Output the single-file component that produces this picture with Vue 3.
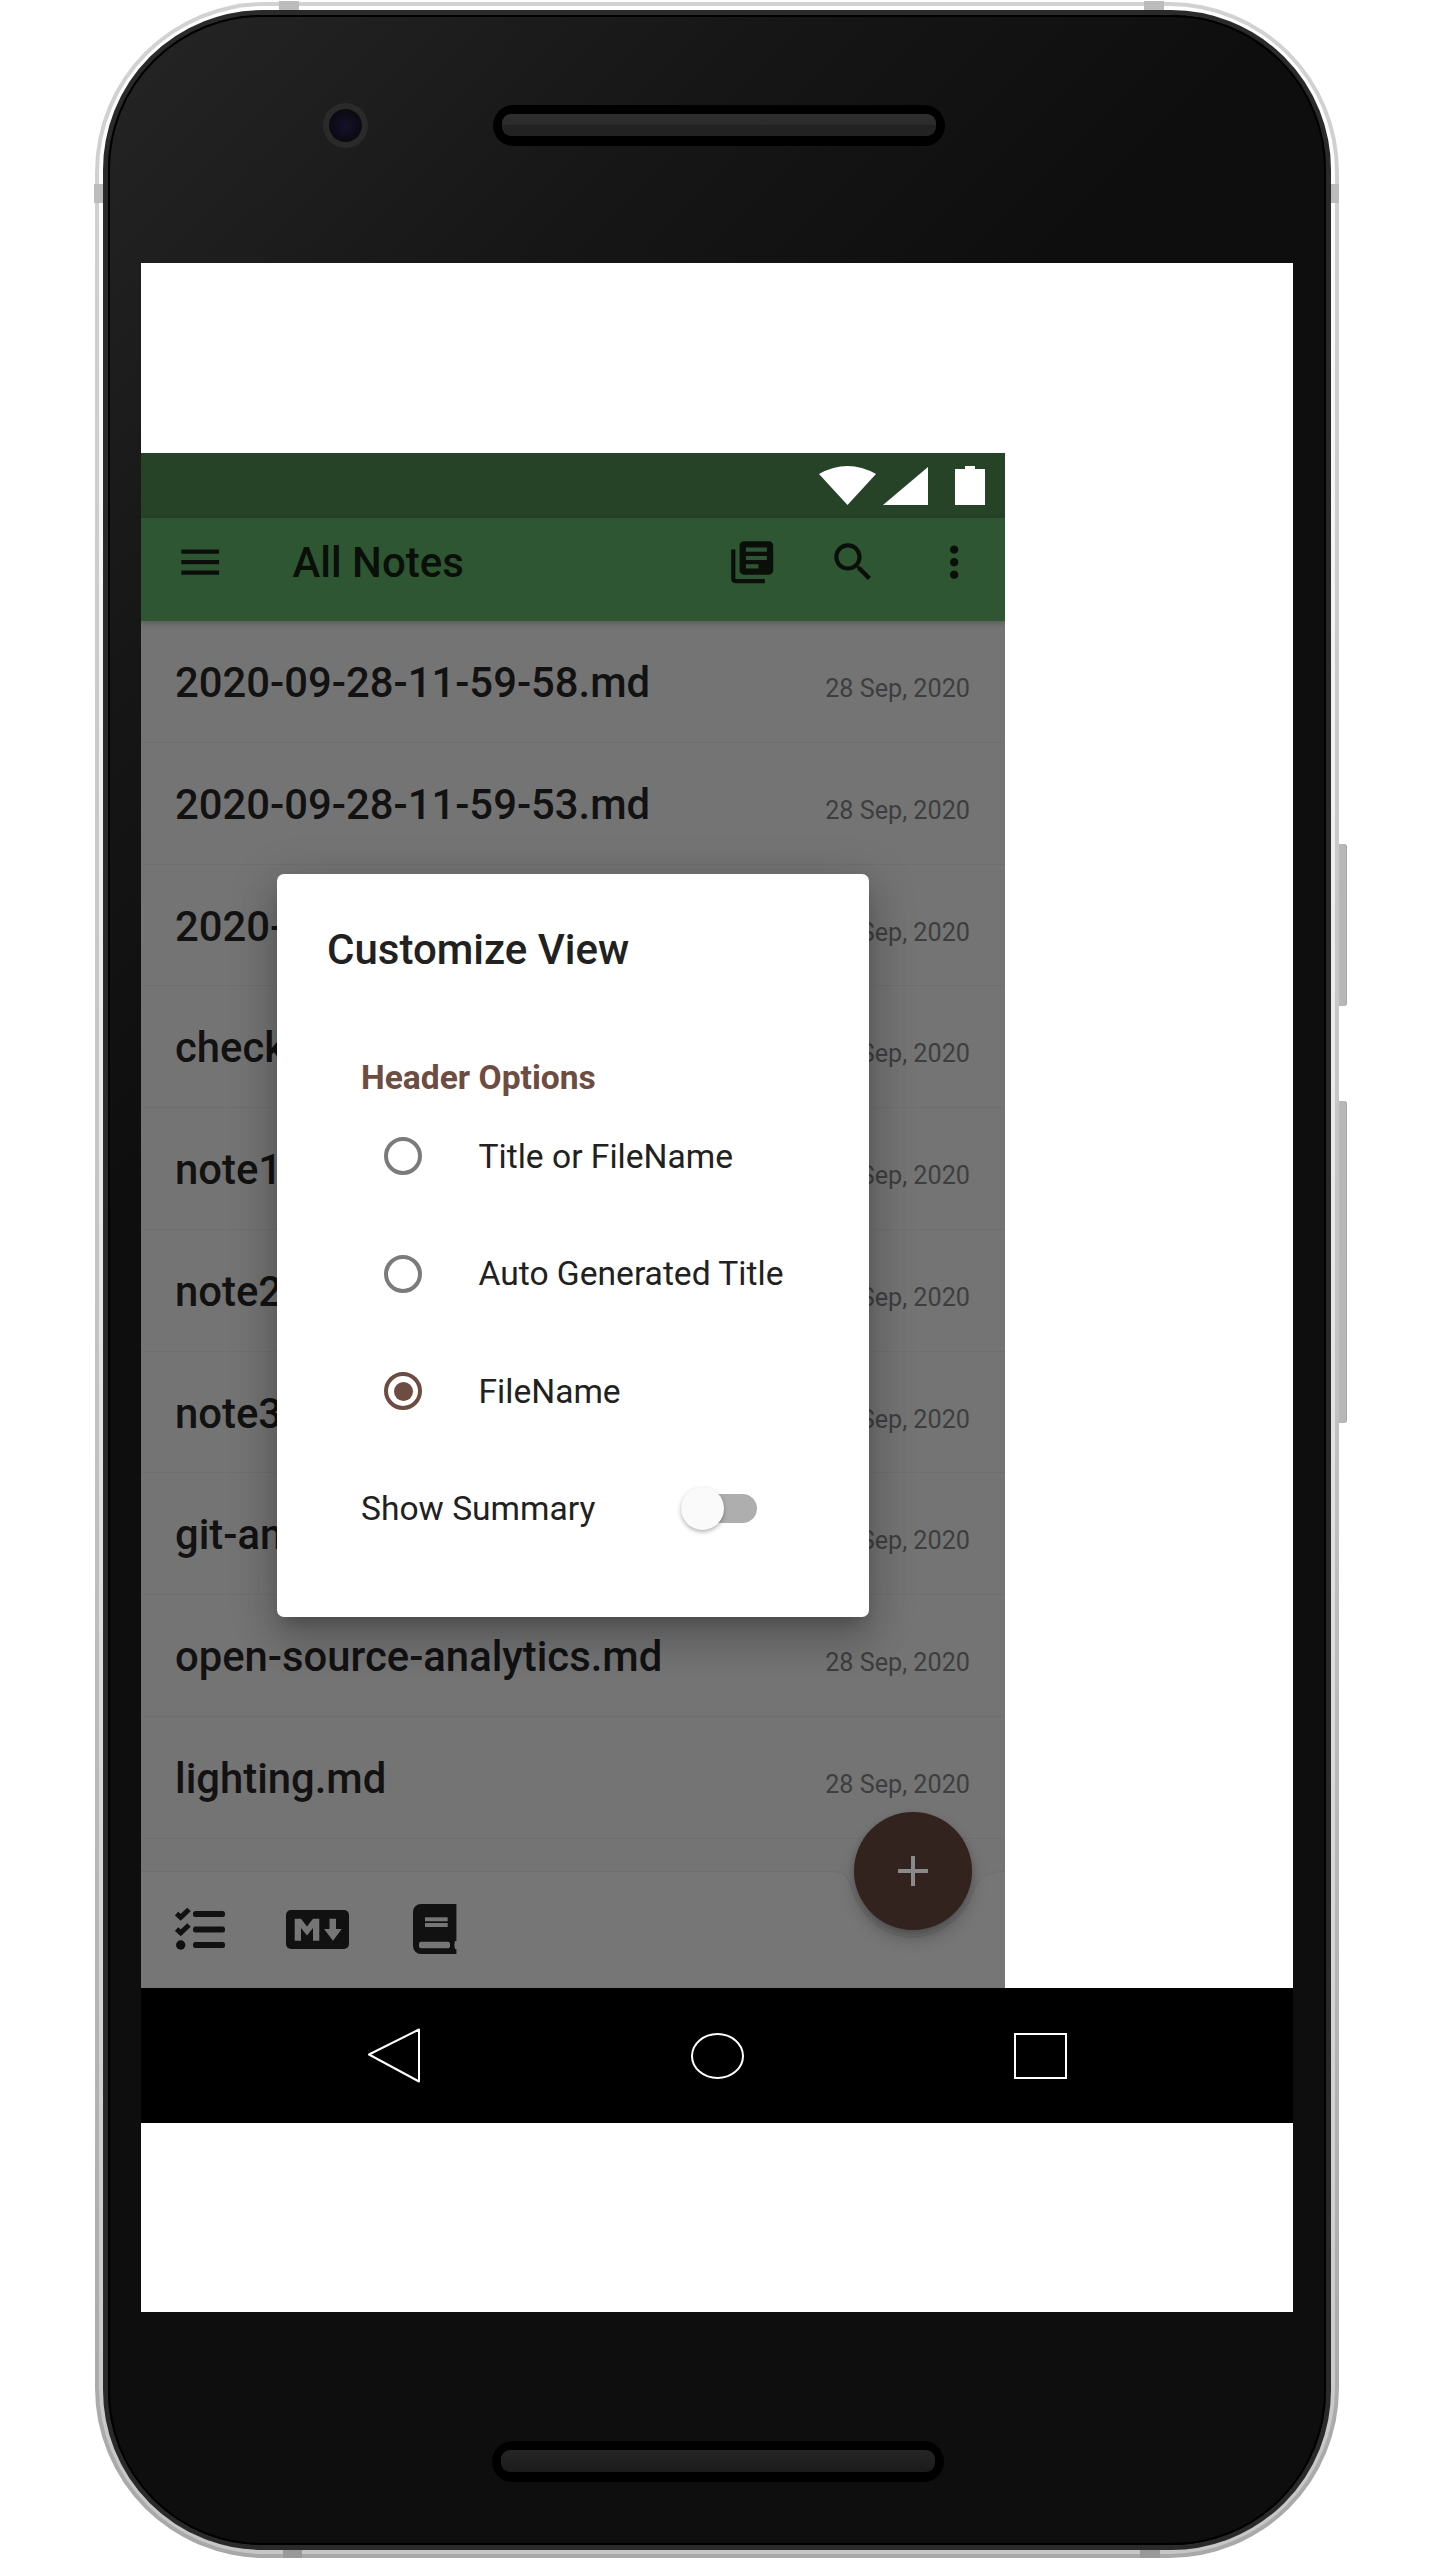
<script setup>
const notes = [
  '2020-09-28-11-59-58.md',
  '2020-09-28-11-59-53.md',
  '2020-09-28-11-59-48.md',
  'checklist.md',
  'note1.md',
  'note2.md',
  'note3.md',
  'git-annex.md',
  'open-source-analytics.md',
  'lighting.md'
]
const options = [
  { label: 'Title or FileName', checked: false },
  { label: 'Auto Generated Title', checked: false },
  { label: 'FileName', checked: true }
]
</script>

<template>
  <div class="page">
    <div class="phone">
      <span class="tab tab-t1"></span>
      <span class="tab tab-t2"></span>
      <span class="tab tab-b1"></span>
      <span class="tab tab-b2"></span>
      <span class="tab tab-l"></span>
      <span class="tab tab-r"></span>
      <span class="side side-1"></span>
      <span class="side side-2"></span>
      <div class="gap">
        <div class="case">
          <div class="bezel">
            <div class="top-row">
              <div class="camera"><div class="lens"></div></div>
              <div class="speaker"><div class="grille"></div></div>
            </div>
            <div class="screen">
              <div class="blank-top"></div>
              <div class="app">
                <div class="status">
                  <svg width="57" height="39" viewBox="0 0 57 39"><path d="M0 8Q28.5-8 57 8L28.5 39Z" fill="#fff"/></svg>
                  <svg class="signal" width="45" height="39" viewBox="0 0 45 39"><path d="M45 1V39H0Z" fill="#fff"/></svg>
                  <svg class="battery" width="30" height="39" viewBox="0 0 30 39"><path d="M10 0H20V3H30V39H0V3H10Z" fill="#fff"/></svg>
                </div>
                <div class="toolbar">
                  <svg class="tb-menu" width="50.4" height="50.4" viewBox="0 0 24 24"><path d="M3 18h18v-2H3v2zm0-5h18v-2H3v2zm0-7v2h18V6H3z"/></svg>
                  <div class="tb-title">All Notes</div>
                  <div class="tb-action"><svg width="50.4" height="50.4" viewBox="0 0 24 24"><path d="M4 6H2v14c0 1.1.9 2 2 2h14v-2H4V6zm16-4H8c-1.1 0-2 .9-2 2v12c0 1.1.9 2 2 2h12c1.1 0 2-.9 2-2V4c0-1.1-.9-2-2-2zm-1 9H9V9h10v2zm-4 4H9v-2h6v2zm4-8H9V5h10v2z"/></svg></div>
                  <div class="tb-action"><svg width="50.4" height="50.4" viewBox="0 0 24 24"><path d="M15.5 14h-.79l-.28-.27C15.41 12.59 16 11.11 16 9.5 16 5.91 13.09 3 9.5 3S3 5.91 3 9.5 5.91 16 9.5 16c1.61 0 3.09-.59 4.23-1.57l.27.28v.79l5 4.99L20.49 19l-4.99-5zm-6 0C7.01 14 5 11.99 5 9.5S7.01 5 9.5 5 14 7.01 14 9.5 11.99 14 9.5 14z"/></svg></div>
                  <div class="tb-action"><svg width="50.4" height="50.4" viewBox="0 0 24 24"><path d="M12 8c1.1 0 2-.9 2-2s-.9-2-2-2-2 .9-2 2 .9 2 2 2zm0 2c-1.1 0-2 .9-2 2s.9 2 2 2 2-.9 2-2-.9-2-2-2zm0 6c-1.1 0-2 .9-2 2s.9 2 2 2 2-.9 2-2-.9-2-2-2z"/></svg></div>
                </div>
                <div class="list">
                  <div v-for="note in notes" :key="note" class="row">
                    <span class="row-title">{{ note }}</span>
                    <span class="row-date">28 Sep, 2020</span>
                  </div>
                </div>
                <div class="bottom-bar">
                  <svg class="bar-shape" width="864" height="117" viewBox="0 0 864 117">
                    <path d="M0 0H692C704 0 708 8 711 18C719 45 743 66 771 66C799 66 825 45 833 18C836 8 846 0 864 0V117H0Z" fill="#767676"/>
                    <path d="M0 .5H692C704 .5 708 8 711 18C719 45 743 66 771 66C799 66 825 45 833 18C836 8 846 .5 864 .5" fill="none" stroke="#6e6e6e" stroke-width="1"/>
                  </svg>
                  <svg class="bi bi-check" width="51" height="42" viewBox="0 0 51 42">
                    <path d="M1.5 5.5L5.7 9.3L14 1.5M1.5 21L5.7 24.8L14 17" fill="none" stroke="#111" stroke-width="5"/>
                    <rect x="18" y="3" width="32" height="6" rx="2.5" fill="#111"/>
                    <rect x="18" y="18.5" width="32" height="6" rx="2.5" fill="#111"/>
                    <rect x="18" y="34" width="32" height="6" rx="2.5" fill="#111"/>
                    <circle cx="5.7" cy="37" r="4.7" fill="#111"/>
                  </svg>
                  <svg class="bi bi-md" width="63" height="39" viewBox="0 0 63 39">
                    <rect width="63" height="39" rx="5" fill="#111"/>
                    <path d="M8.7 30.7V8.7H15L21 16.5L27 8.7H33.3V30.7H27V18L21 25.5L15 18V30.7Z" fill="#767676"/>
                    <path d="M43.5 8.7H50V19H55.7L47 30.7L38 19H43.5Z" fill="#767676"/>
                  </svg>
                  <svg class="bi bi-book" width="44" height="50" viewBox="0 0 44 50">
                    <path d="M8 0H43.4V37H42Q40.5 41 42 45H43.4V50H8A8 8 0 0 1 0 42V8A8 8 0 0 1 8 0Z" fill="#111"/>
                    <rect x="6" y="37.7" width="31" height="6.6" rx="2" fill="#767676"/>
                    <rect x="12" y="13.3" width="22.7" height="4" fill="#767676"/>
                    <rect x="12" y="19" width="22.7" height="4" fill="#767676"/>
                  </svg>
                </div>
                <div class="fab"><span class="plus-h"></span><span class="plus-v"></span></div>
                <div class="dialog">
                  <div class="dlg-title">Customize View</div>
                  <div class="dlg-body">
                    <div class="dlg-head">Header Options</div>
                    <div v-for="opt in options" :key="opt.label" class="opt">
                      <span class="radio" :class="{ on: opt.checked }"><span v-if="opt.checked" class="dot"></span></span>
                      <span class="opt-label">{{ opt.label }}</span>
                    </div>
                    <div class="summary">
                      <span class="sum-label">Show Summary</span>
                      <span class="track"><span class="thumb"></span></span>
                    </div>
                  </div>
                </div>
              </div>
              <div class="nav">
                <div class="nav-item"><svg width="54" height="55" viewBox="0 0 54 55"><path d="M52 1.5V53.5L2 26.5Z" fill="none" stroke="#fff" stroke-width="2" stroke-linejoin="round"/></svg></div>
                <div class="nav-item"><svg width="53" height="46" viewBox="0 0 53 46"><ellipse cx="26.5" cy="23" rx="25.5" ry="22" fill="none" stroke="#fff" stroke-width="2"/></svg></div>
                <div class="nav-item"><svg width="53" height="46" viewBox="0 0 53 46"><rect x="1" y="1" width="51" height="44" fill="none" stroke="#fff" stroke-width="2"/></svg></div>
              </div>
              <div class="blank-bottom"></div>
            </div>
            <div class="bottom-row">
              <div class="speaker low"><div class="grille"></div></div>
            </div>
          </div>
        </div>
      </div>
    </div>
  </div>
</template>

<style>
body { margin: 0; background: #fff; }
</style>

<style scoped>
.page {
  width: 1440px;
  height: 2560px;
  box-sizing: border-box;
  padding: 2px 0 0 95px;
  background: #fff;
  font-family: Roboto, "Liberation Sans", sans-serif;
  overflow: hidden;
}
.phone {
  position: relative;
  width: 1244px;
  height: 2556px;
  box-sizing: border-box;
  padding: 4px;
  border-radius: 170px;
  background: linear-gradient(180deg, #d2d2d2 0%, #c4c4c4 50%, #a8a8a8 100%);
}
.gap {
  height: 100%;
  box-sizing: border-box;
  padding: 4px;
  border-radius: 166px;
  background: linear-gradient(180deg, #fff 0%, #e6e6e6 50%, #c6c6c6 100%);
}
.case {
  height: 100%;
  box-sizing: border-box;
  border: 5px solid #2a2a2a;
  border-radius: 160px;
  background: #000;
}
.bezel {
  height: 100%;
  box-sizing: border-box;
  border: 2px solid #000;
  border-radius: 154px;
  padding: 0 31px;
  background: linear-gradient(135deg, #252525 0%, #161616 18%, #0e0e0e 32%, #0e0e0e 100%);
}
.tab { position: absolute; background: #bcbcbc; }
.tab-t1 { left: 184px; top: -1px; width: 20px; height: 9px; }
.tab-t2 { left: 1049px; top: -1px; width: 20px; height: 9px; }
.tab-b1 { left: 188px; bottom: 0; width: 19px; height: 8px; background: #999; }
.tab-b2 { left: 1045px; bottom: 0; width: 20px; height: 8px; background: #999; }
.tab-l { left: -1px; top: 182px; width: 9px; height: 19px; }
.tab-r { right: 0; top: 182px; width: 8px; height: 19px; }
.side {
  position: absolute;
  left: 1244px;
  width: 8px;
  box-sizing: border-box;
  background: #b7b7b7;
  border-right: 1px solid #a6a6a6;
  border-radius: 0 3px 3px 0;
}
.side-1 { top: 842px; height: 162px; }
.side-2 { top: 1099px; height: 322px; }

.top-row {
  height: 217px;
  margin-bottom: 29px;
  box-sizing: border-box;
  padding-left: 182px;
  display: flex;
  align-items: center;
  gap: 125px;
}
.camera {
  width: 45px;
  height: 45px;
  border-radius: 50%;
  background: #2a2a2a;
  display: flex;
  align-items: center;
  justify-content: center;
}
.lens {
  width: 33px;
  height: 33px;
  border-radius: 50%;
  background: radial-gradient(circle, #15112a 0%, #0b0a12 70%);
}
.speaker {
  width: 452px;
  height: 41px;
  box-sizing: border-box;
  padding: 9px 9px 10px;
  background: #000;
  border-radius: 21px;
}
.grille {
  height: 22px;
  border-radius: 9px;
  background: linear-gradient(180deg, #2f2f2f 0%, #2a2a2a 50%, #222 52%, #222 100%);
}
.low .grille { background: linear-gradient(180deg, #262626 0%, #202020 50%, #1b1b1b 100%); }
.bottom-row {
  height: 231px;
  box-sizing: border-box;
  padding: 129px 0 0 351px;
}

.screen {
  width: 1152px;
  height: 2049px;
  display: flex;
  flex-direction: column;
  background: #fff;
}
.blank-top { height: 190px; flex: none; }
.blank-bottom { flex: 1; }
.app {
  position: relative;
  width: 864px;
  height: 1535px;
  flex: none;
  display: flex;
  flex-direction: column;
  overflow: hidden;
}
.status {
  height: 65px;
  flex: none;
  box-sizing: border-box;
  padding: 13px 20px 0 0;
  display: flex;
  justify-content: flex-end;
  align-items: flex-start;
  background: #264327;
}
.signal { margin-left: 7px; }
.battery { margin-left: 27px; }
.toolbar {
  position: relative;
  z-index: 2;
  height: 103px;
  flex: none;
  box-sizing: border-box;
  padding: 19px 0 0 34px;
  display: flex;
  align-items: flex-start;
  background: #2f5632;
  box-shadow: 0 2px 6px rgba(0, 0, 0, .25);
  color: #0a0f0a;
}
.toolbar svg { fill: #0a0f0a; display: block; }
.tb-title {
  margin: 1px 0 0 67px;
  flex: 1;
  font-size: 42px;
  font-weight: 500;
  line-height: 50px;
}
.tb-action {
  width: 101px;
  display: flex;
  justify-content: center;
}
.list {
  flex: 1;
  min-height: 0;
  overflow: hidden;
  background: #747474;
}
.row {
  height: 121.75px;
  box-sizing: border-box;
  padding: 39px 35px 0 34px;
  display: flex;
  justify-content: space-between;
  align-items: baseline;
  border-bottom: 1px solid #6f6f6f;
}
.row-title {
  font-size: 41.8px;
  line-height: 46px;
  font-weight: 500;
  color: #121212;
}
.row-date {
  font-size: 25.2px;
  color: #3e3e3e;
}
.bottom-bar {
  position: relative;
  height: 117px;
  flex: none;
  box-sizing: border-box;
  padding-left: 34px;
  background: #747474;
}
.bar-shape { position: absolute; left: 0; top: 0; }
.bi { position: absolute; }
.bi-check { left: 34px; top: 37px; }
.bi-md { left: 145px; top: 39px; }
.bi-book { left: 272px; top: 33px; }
.fab {
  position: absolute;
  left: 713px;
  top: 1359px;
  width: 118px;
  height: 118px;
  border-radius: 50%;
  background: #33231f;
  box-shadow: 0 10px 16px rgba(0, 0, 0, .2), 0 3px 6px rgba(0, 0, 0, .18);
}
.plus-h, .plus-v { position: absolute; background: #8a8a8a; }
.plus-h { left: 44px; top: 56.75px; width: 30px; height: 4.5px; }
.plus-v { left: 56.75px; top: 44px; width: 4.5px; height: 30px; }

.dialog {
  position: absolute;
  z-index: 3;
  left: 136px;
  top: 421px;
  width: 592px;
  box-sizing: border-box;
  padding: 52px 0 49.5px;
  background: #fff;
  border-radius: 7px;
  box-shadow: 0 24px 38px 3px rgba(0, 0, 0, .14), 0 9px 46px 8px rgba(0, 0, 0, .12), 0 11px 15px -7px rgba(0, 0, 0, .2);
}
.dlg-title {
  padding-left: 50px;
  font-size: 42px;
  font-weight: 500;
  line-height: 48px;
  color: #212121;
}
.dlg-body {
  margin-top: 83.5px;
  padding: 0 112px 0 84px;
}
.dlg-head {
  font-size: 33.6px;
  line-height: 40px;
  font-weight: 700;
  color: #6d4c41;
}
.opt {
  height: 117.5px;
  box-sizing: border-box;
  padding-left: 23px;
  display: flex;
  align-items: center;
  white-space: nowrap;
}
.radio {
  flex: none;
  width: 38px;
  height: 38px;
  box-sizing: border-box;
  border: 4.5px solid #7b7b7b;
  border-radius: 50%;
  display: flex;
  align-items: center;
  justify-content: center;
}
.radio.on { border-color: #6d4c41; }
.dot {
  width: 19px;
  height: 19px;
  border-radius: 50%;
  background: #6d4c41;
}
.opt-label {
  margin-left: 56.5px;
  font-size: 33.6px;
  color: #212121;
}
.summary {
  height: 117.5px;
  display: flex;
  justify-content: space-between;
  align-items: center;
}
.sum-label {
  font-size: 33.6px;
  color: #212121;
}
.track {
  position: relative;
  width: 74px;
  height: 29px;
  border-radius: 15px;
  background: #aeaeae;
}
.thumb {
  position: absolute;
  left: -2px;
  top: -7px;
  width: 43px;
  height: 43px;
  border-radius: 50%;
  background: #fafafa;
  box-shadow: 0 2px 4px rgba(0, 0, 0, .3);
}
.nav {
  height: 135px;
  flex: none;
  display: flex;
  justify-content: center;
  align-items: center;
  background: #000;
}
.nav-item {
  width: 323px;
  display: flex;
  justify-content: center;
  align-items: center;
}
.nav svg { display: block; }
</style>
